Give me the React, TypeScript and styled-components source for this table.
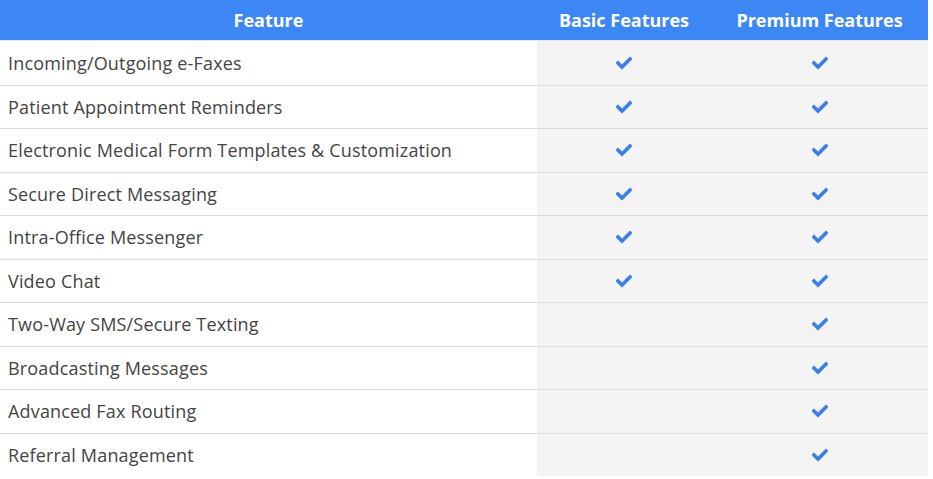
import React from "react";
import styled, { createGlobalStyle } from "styled-components";
import { FaCheck } from "react-icons/fa";

const Global = createGlobalStyle`
  html, body { margin: 0; padding: 0; background: #fff; }
  body { font-family: "Open Sans", "Liberation Sans", sans-serif; }
`;

const Table = styled.div`
  width: 928px;
  display: grid;
  grid-template-columns: 537px 174px 217px;
`;

const HeadCell = styled.div`
  height: 41px;
  background: #3d87f5;
  color: #fff;
  font-weight: 700;
  font-size: 18px;
  display: flex;
  align-items: center;
  justify-content: center;
  border-bottom: 1px solid #e3e8ef;
  box-sizing: border-box;
  padding-bottom: 1px;
`;

const Cell = styled.div<{ $shade?: boolean; $first?: boolean }>`
  height: 43.5px;
  box-sizing: border-box;
  border-top: ${(p) => (p.$first ? "none" : "1px solid #dcdcdc")};
  background: ${(p) => (p.$shade ? "#f4f4f4" : "#fff")};
  display: flex;
  align-items: center;
`;

const Label = styled(Cell)`
  padding-left: 8px;
  font-size: 18px;
  letter-spacing: 0.17px;
  color: #444;
`;

const Mark = styled(Cell)`
  justify-content: center;
  color: #3a7fe6;
  font-size: 16px;
  svg { stroke: currentColor; stroke-width: 20px; }
`;

const rows: [string, boolean][] = [
  ["Incoming/Outgoing e-Faxes", true],
  ["Patient Appointment Reminders", true],
  ["Electronic Medical Form Templates & Customization", true],
  ["Secure Direct Messaging", true],
  ["Intra-Office Messenger", true],
  ["Video Chat", true],
  ["Two-Way SMS/Secure Texting", false],
  ["Broadcasting Messages", false],
  ["Advanced Fax Routing", false],
  ["Referral Management", false],
];

export default function App() {
  return (
    <>
      <Global />
      <Table>
        <HeadCell>Feature</HeadCell>
        <HeadCell>Basic Features</HeadCell>
        <HeadCell>Premium Features</HeadCell>
        {rows.map(([name, basic], i) => (
          <React.Fragment key={name}>
            <Label $first={i === 0}>{name}</Label>
            <Mark $shade $first={i === 0}>{basic && <FaCheck />}</Mark>
            <Mark $shade $first={i === 0}><FaCheck /></Mark>
          </React.Fragment>
        ))}
      </Table>
    </>
  );
}
